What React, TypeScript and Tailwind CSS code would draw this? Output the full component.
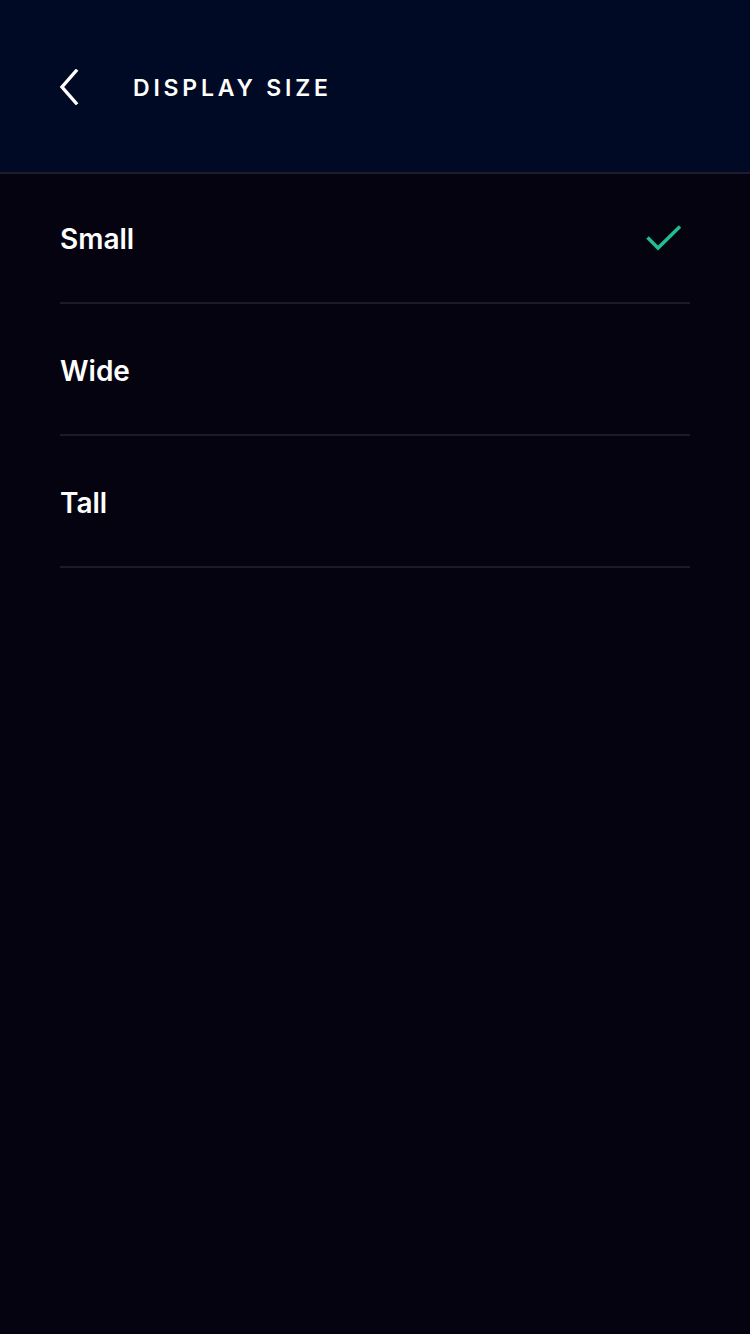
import { useState } from 'react';

const options = ['Small', 'Wide', 'Tall'];

function ChevronLeft() {
  return (
    <svg width="20" height="36" viewBox="0 0 20 36" fill="none" stroke="white" strokeWidth={3.4} strokeLinecap="square">
      <path d="M17 2 L3 18 L17 34" />
    </svg>
  );
}

function Check() {
  return (
    <svg width="36" height="28" viewBox="0 0 36 28" fill="none" stroke="#1fbf8f" strokeWidth={3.4}>
      <path d="M1.5 13.5 L12 24 L34 2.5" />
    </svg>
  );
}

export default function App() {
  const [selected, setSelected] = useState('Small');

  return (
    <div className="min-h-[1334px] bg-[#05030f] font-['Inter','Liberation_Sans',sans-serif] text-white">
      <header className="h-[174px] bg-[#010a24] border-b-2 border-[#1f1d2d] flex items-start pt-[69px] pl-[59px]">
        <button className="w-[20px] h-[36px] flex items-center">
          <ChevronLeft />
        </button>
        <h1 className="ml-[54px] mt-[3px] text-[23px] font-semibold tracking-[0.165em] leading-[32px]">
          DISPLAY SIZE
        </h1>
      </header>

      <ul className="px-[60px] -mt-[2px]">
        {options.map((opt) => (
          <li key={opt} className="h-[132px] border-b-2 border-[#1c1b29]">
            <button
              onClick={() => setSelected(opt)}
              className="w-full h-full flex items-center justify-between pt-[3px]"
            >
              <span className="text-[28px] font-semibold leading-none">{opt}</span>
              {selected === opt && (
                <span className="mr-[8px] -mt-[2px]">
                  <Check />
                </span>
              )}
            </button>
          </li>
        ))}
      </ul>
    </div>
  );
}
